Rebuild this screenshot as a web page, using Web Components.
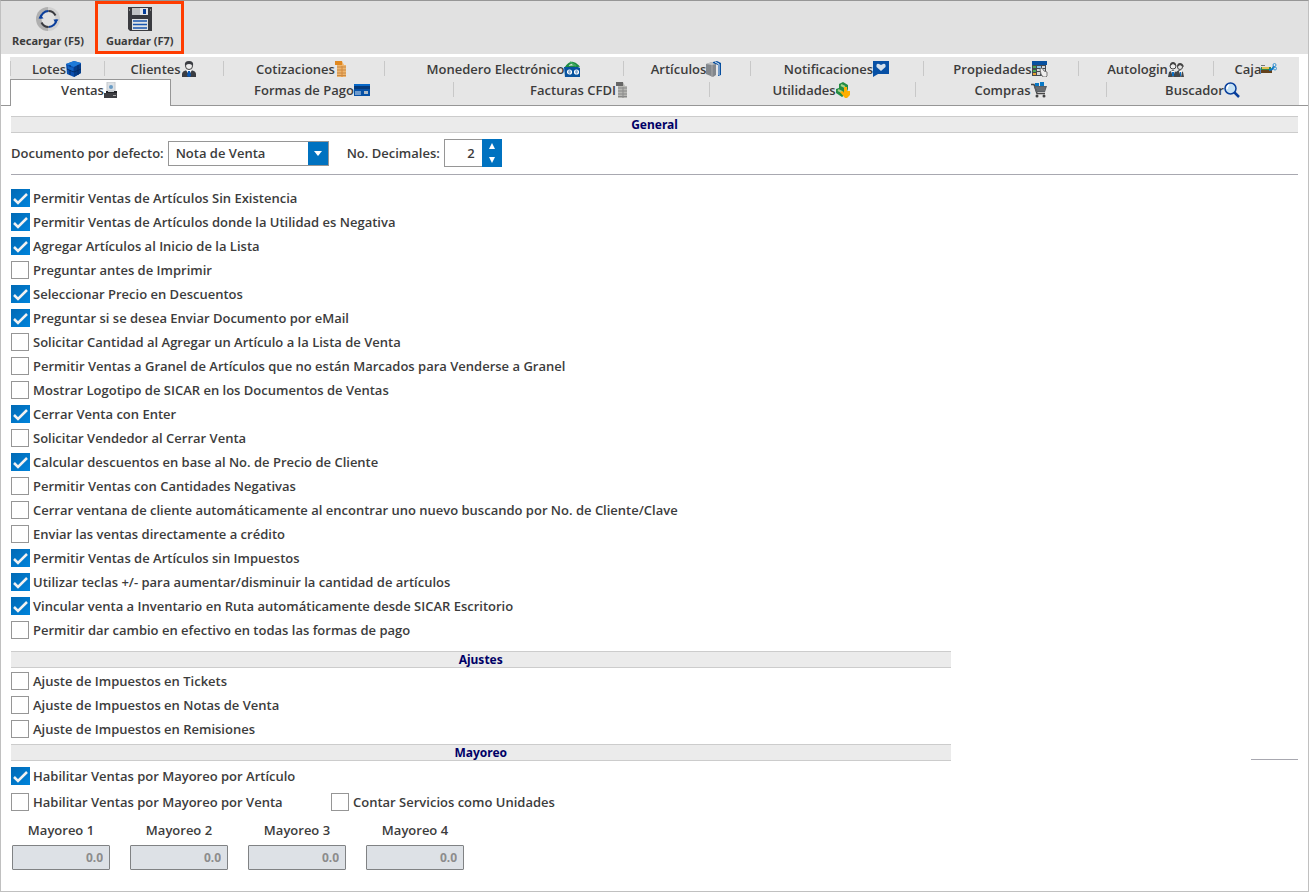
<!DOCTYPE html>
<html lang="es">
<head>
<meta charset="utf-8">
<meta name="viewport" content="width=device-width, initial-scale=1">
<title>Configuración</title>
<style>
  * {
    box-sizing: border-box;
  }

  body {
    --text: #3c3c3c;
    --accent: #0072c0;
    --line: #cccccc;
    --edge: #969696;
    margin: 0;
    color: var(--text);
    font: 600 13px/16px "Open Sans", "Noto Sans", sans-serif;
    background: #fff;
  }
</style>
</head>
<body>
<settings-window></settings-window>

<script>
const icons = {
  reload: `<path d="M12 0A12 12 0 0 0 12 24Z" fill="#b0b0b0"/><path d="M12 0a12 12 0 0 1 0 24Z" fill="#d0d0d0"/>
    <circle cx="12.500" cy="12" r="7" fill="#e1e1e1"/>
    <g fill="none" stroke="#0b3f9c" stroke-width="2"><path d="M4.500 11.500a8 8 0 0 1 8-7.500M20.500 12.500a8 8 0 0 1-8 7.500"/></g>
    <g fill="none" stroke="#3a3b40" stroke-width="2"><path d="M12.500 4a8 8 0 0 1 7 4.500M12.500 20a8 8 0 0 1-7-4.500"/></g>
    <path d="M2.500 11.500h5l-3-4zM17.500 12.500h5l-3 4z" fill="#0b3f9c"/>`,
  save: `<path d="M0 0h24v24H2l-2-2z" fill="#3a3b40"/><path d="M4 1h8v7H4z" fill="#c0c2c4"/><path d="M12 1h8v7h-8z" fill="#e4e6e8"/>
    <path d="M15 2h3v5h-3z" fill="#063f9a"/><path d="M4 12h16v11H4z" fill="#e0e3e6"/><path d="M5 14h14M5 17.500h14M5 21h14" stroke="#1a57b0" stroke-width="1.500"/>
    <path d="M1 2h1v2H1zM22 2h1v2h-1z" fill="#888"/>`,
  box: `<path d="M0 3l8-3 7 2v10l-7 4-7-3z" fill="#0b4fae"/><path d="M0 3l8-3 7 2-7 4z" fill="#1d7ad8"/><path d="M8 6l7-3v9l-7 4z" fill="#063d88"/>
    <path d="M1 8l7 3 7-3M4 4v10M12 4v10" fill="none" stroke="#052d66"/><path d="M2 5l5 2v3L2 8z" fill="#1263c2"/>`,
  person: `<path d="M1 16v-3q0-3 5-4h4q5 1 5 4v3z" fill="#3b3d42"/><path d="M5 9l3 5 3-5z" fill="#fff"/><path d="M7 10h2l1 5-2 1-2-1z" fill="#0b58b5"/>
    <circle cx="8" cy="5" r="3.500" fill="#eee" stroke="#444"/><path d="M4 5q-1-5 4-5t4 5q-1-2-4-2T4 5z" fill="#3b3d42"/>`,
  quote: `<path d="M0 0h7l2 4h2v12H2V4H0z" fill="#efb56d"/><path d="M0 0h7v4H0z" fill="#e08820"/><path d="M2 6h9M2 9h9M2 12h9M2 14.500h9" stroke="#c58a4a"/><path d="M7 5v11" stroke="#d7893a"/>`,
  wallet: `<path d="M2 6q6-8 12-1z" fill="#eee" stroke="#1c8b42" stroke-width="2"/><path d="M6 1l6 4" stroke="#3cab5d" stroke-width="2"/>
    <path d="M0 6h14l2 1v9H1z" fill="#07539f"/><g fill="none" stroke="#fff" stroke-width="1.200"><circle cx="5.500" cy="11" r="2"/><circle cx="12.500" cy="11" r="2"/></g><path d="M4 11h4M11 11h3" stroke="#fff"/>`,
  books: `<path d="M0 3l6-2 4 2v11l-3 2-7-3z" fill="#83878c"/><path d="M0 3l6-2 4 2-4 1z" fill="#bfc2c4"/><path d="M6 4v12" stroke="#aaa"/>
    <path d="M7 1l4-1 4 2v12l-3 1V4L7 2z" fill="#084f9f"/><path d="M9 1l4 2v11" fill="none" stroke="#dce9f5"/>`,
  notice: `<path d="M0 0h16v13H5l-5 3z" fill="#0750a5"/><path d="M8 10L3.500 6Q3 2 6 3l2 1 2-1q3-1 2.500 3z" fill="#d4e0ec"/>`,
  sheet: `<path d="M0 4h14v11H0z" fill="#45494e"/><path d="M0 0h15v4H0z" fill="#07509f"/>
    <path d="M1 5h3v2H1zM1 9h3v2H1z" fill="#4aa656"/><path d="M1 12h3v2H1z" fill="#e5a02f"/><path d="M5 5h4v2H5z" fill="#8fc0e6"/>
    <path d="M10 5h3v2h-3zM5 8h4v2H5zM10 8h3v2h-3zM5 11h3v3H5z" fill="#d3d6d8"/><path d="M8 8l2-1 2 3 3 1v4l-1 1h-3l-2-3z" fill="#eee" stroke="#777"/>`,
  people: `<path d="M0 16l1-5 4-2 3 2 3-2 4 2 1 5z" fill="#44474b"/><circle cx="5" cy="5" r="3" fill="#eee" stroke="#444"/><circle cx="12" cy="6" r="2.500" fill="#e5e5e5" stroke="#444"/>
    <path d="M2 5q0-4 3-4t3 4L5 3zM9 6q0-4 3-4t4 4l-4-2z" fill="#454545"/><path d="M3 10h4l-2 6zM11 10h3l-1 6z" fill="#fff"/><path d="M4 11h2v4H4zM12 11h1v4h-1z" fill="#0a70c8"/>`,
  cash: `<path d="M0 6h10v5H0z" fill="#318b45"/><path d="M0 9h11v3H0z" fill="#63411c"/><path d="M1 7h7" stroke="#e2bd54" stroke-width="2"/><path d="M0 4.500h4" stroke="#777"/>
    <path d="M8 9q4 0 5-4" fill="none" stroke="#0876c5" stroke-width="2"/><circle cx="14" cy="7.500" r="1.500" fill="none" stroke="#3b93d2"/><circle cx="13.500" cy="4" r="1.500" fill="none" stroke="#3b93d2"/>`,
  printer: `<path d="M3 0h8v10H3z" fill="#dde1e5" stroke="#c4c8cc"/><circle cx="7" cy="5" r="2" fill="#699bc5"/><path d="M2 9h11v3H2z" fill="#222428"/><path d="M0 11h13v5H0z" fill="#3d3e42"/>
    <path d="M4 8h6v2H4z" fill="#c8ccd0"/><path d="M9 13.500h3" stroke="#aaa"/>`,
  card: `<path d="M0 3h16v11H0z" fill="#0751a6"/><path d="M0 2h16v2H0z" fill="#0768c8"/><path d="M0 4h16v3H0z" fill="#053a7a"/><path d="M1 10h6M1 12h6" stroke="#d5e4f1"/><path d="M10 9h4v3h-4z" fill="#aebbc7"/>`,
  invoice: `<path d="M0 0h7l2 4h2v12H2V4H0z" fill="#b8b8b4"/><path d="M0 0h7v4H0z" fill="#666"/><path d="M2 6h9M2 9h9M2 12h9M2 14.500h9" stroke="#888"/><path d="M7 5v11" stroke="#8c8c8c"/>`,
  profit: `<path d="M0 7l3-1V2l4-2 5 3v4l-2 5-4 3-6-4z" fill="#238c44"/><path d="M2 8l4 2M5 3l4 2" stroke="#a6d489" stroke-width="2"/><path d="M4 10l3-1 1 2V5h3v4h3v4l-3 3H9z" fill="#ffae00"/>`,
  cart: `<path d="M4 1h4v4H4zM9 0h4v4H9z" fill="#0878c6"/><path d="M0 2.500h3l3 9h8" fill="none" stroke="#474747" stroke-width="1.500"/><path d="M3 4h13l-2 6H5z" fill="#5a5e63"/><path d="M5 6h9M6 8h8" stroke="#888" stroke-width=".7"/><circle cx="6" cy="14" r="1.500" fill="#444"/><circle cx="13" cy="14" r="1.500" fill="#444"/>`,
  search: `<circle cx="6.500" cy="6.500" r="5.500" fill="#c6e1f4" stroke="#083f9c" stroke-width="1.500"/><path d="M5 3q-2 1-2 4" stroke="#fff" stroke-width="1.500" fill="none"/><path d="M10.500 10.500L15 15" stroke="#083f9c" stroke-width="2.500"/>`
};

const icon = (name, size) => {
  return `<svg width="${size}" height="${size}" viewBox="0 0 ${size} ${size}" aria-hidden="true">${icons[name]}</svg>`;
};

class ToolButton extends HTMLElement {
  constructor() {
    super();
    this.attachShadow({ mode: 'open' }).innerHTML = `<style>
      :host {
        display: flex;
      }

      button {
        display: flex;
        flex-direction: column;
        align-items: center;
        gap: 2px;
        padding: 3px 8px 0;
        border: 3px solid transparent;
        background: none;
        color: inherit;
        font: bold 11px/16px "Noto Sans", sans-serif;
        white-space: nowrap;
      }

      :host([marked]) button {
        border-color: #ff3c00;
      }
    </style>
    <button type="button">${icon(this.getAttribute('icon'), 24)}<slot></slot></button>`;
  }
}

class TabItem extends HTMLElement {
  constructor() {
    super();
    const selected = this.hasAttribute('selected');
    this.attachShadow({ mode: 'open' }).innerHTML = `<style>
      :host {
        display: flex;
        min-width: 0;
      }

      button {
        flex: 1;
        display: flex;
        align-items: center;
        justify-content: center;
        padding: 0;
        border: 0;
        background: linear-gradient(#c8c8c8, #c8c8c8) no-repeat left center / 1px 15px;
        color: inherit;
        font: inherit;
        white-space: nowrap;
      }

      :host([plain]) button {
        background: none;
      }

      :host([selected]) {
        margin-bottom: -6px;
      }

      :host([selected]) button {
        border: 1px solid var(--edge);
        border-bottom: 0;
        padding-bottom: 7px;
        background: #fff;
      }
    </style>
    <button type="button" role="tab" aria-selected="${selected}"><slot></slot>${icon(this.getAttribute('icon'), 16)}</button>`;
  }
}

class TabStrip extends HTMLElement {
  constructor() {
    super();
    this.attachShadow({ mode: 'open' }).innerHTML = `<style>
      :host {
        display: block;
        padding: 0 9px;
        border-bottom: 1px solid var(--edge);
      }

      .rows {
        padding: 1px 0 5px;
        background: #e6e6e6;
      }

      .row {
        display: grid;
        height: 21px;
      }

      .top {
        grid-template-columns: 94fr 119fr 161fr 239fr 127fr 173fr 155fr 135fr 86fr;
      }

      .front {
        grid-template-columns: 161fr 282fr 256fr 206fr 191fr 193fr;
      }
    </style>
    <div class="rows" role="tablist">
      <div class="row top">
        <tab-item icon="box">Lotes</tab-item>
        <tab-item icon="person">Clientes</tab-item>
        <tab-item icon="quote">Cotizaciones</tab-item>
        <tab-item icon="wallet">Monedero Electrónico</tab-item>
        <tab-item icon="books">Artículos</tab-item>
        <tab-item icon="notice">Notificaciones</tab-item>
        <tab-item icon="sheet">Propiedades</tab-item>
        <tab-item icon="people">Autologin</tab-item>
        <tab-item icon="cash">Caja</tab-item>
      </div>
      <div class="row front">
        <tab-item icon="printer" selected>Ventas</tab-item>
        <tab-item icon="card" plain>Formas de Pago</tab-item>
        <tab-item icon="invoice">Facturas CFDI</tab-item>
        <tab-item icon="profit">Utilidades</tab-item>
        <tab-item icon="cart">Compras</tab-item>
        <tab-item icon="search">Buscador</tab-item>
      </div>
    </div>`;
  }
}

class SectionTitle extends HTMLElement {
  constructor() {
    super();
    this.attachShadow({ mode: 'open' }).innerHTML = `<style>
      :host {
        display: block;
        border: solid var(--line);
        border-width: 1px 0;
        background: #ebebeb;
      }

      h2 {
        margin: 0;
        color: #000066;
        font: bold 12px/15px "Noto Sans", sans-serif;
        text-align: center;
      }
    </style>
    <h2><slot></slot></h2>`;
  }
}

class CheckOption extends HTMLElement {
  constructor() {
    super();
    const checked = this.hasAttribute('checked') ? 'checked' : '';
    this.attachShadow({ mode: 'open' }).innerHTML = `<style>
      :host {
        display: flex;
      }

      label {
        display: flex;
        align-items: center;
        height: 24px;
        white-space: nowrap;
      }

      .mark {
        display: grid;
        width: 22px;
      }

      input, svg {
        grid-area: 1 / 1;
      }

      input {
        appearance: none;
        box-sizing: border-box;
        width: 18px;
        height: 18px;
        margin: 0;
        border: 1px solid var(--edge);
        background: #fff;
      }

      input:checked {
        width: 19px;
        border: 0;
        background: linear-gradient(135deg, #0069b4, #0084dc);
      }

      svg {
        display: none;
        pointer-events: none;
      }

      input:checked + svg {
        display: block;
      }
    </style>
    <label>
      <span class="mark">
        <input type="checkbox" ${checked}>
        <svg width="19" height="18" viewBox="0 0 19 18"><path d="M3 10l4 4 9-9" fill="none" stroke="#f2f2f2" stroke-width="2.500"/></svg>
      </span>
      <slot></slot>
    </label>`;
  }
}

class SelectField extends HTMLElement {
  constructor() {
    super();
    this.attachShadow({ mode: 'open' }).innerHTML = `<style>
      :host {
        display: flex;
        align-items: center;
        gap: 4px;
      }

      .box {
        display: grid;
        grid-template-columns: 1fr 20px;
        width: 161px;
        height: 25px;
        box-sizing: border-box;
        border: 1px solid var(--edge);
      }

      select {
        grid-area: 1 / 1 / 2 / 3;
        appearance: none;
        padding: 0 7px;
        border: 0;
        background: none;
        color: inherit;
        font: inherit;
      }

      svg {
        grid-area: 1 / 2;
        width: 20px;
        height: 23px;
        background: var(--accent);
        pointer-events: none;
      }
    </style>
    <label for="field"><slot></slot></label>
    <span class="box">
      <select id="field"><option>${this.getAttribute('value')}</option></select>
      <svg viewBox="0 0 20 23"><path d="M6 9h8l-4 5z" fill="#fff"/></svg>
    </span>`;
  }
}

class SpinField extends HTMLElement {
  constructor() {
    super();
    this.attachShadow({ mode: 'open' }).innerHTML = `<style>
      :host {
        display: flex;
        align-items: center;
        gap: 4px;
      }

      .box {
        display: flex;
        height: 28px;
      }

      input {
        appearance: textfield;
        box-sizing: border-box;
        width: 38px;
        padding: 0 7px;
        border: 1px solid var(--edge);
        border-right: 0;
        color: inherit;
        font: inherit;
        text-align: right;
      }

      input::-webkit-inner-spin-button {
        appearance: none;
        margin: 0;
      }

      .steps {
        display: grid;
        width: 20px;
        background: var(--accent);
      }

      button {
        display: grid;
        place-items: center;
        padding: 0;
        border: 0;
        background: none;
      }
    </style>
    <label for="field"><slot></slot></label>
    <span class="box">
      <input id="field" type="number" value="${this.getAttribute('value')}">
      <span class="steps">
        <button type="button" aria-label="Más"><svg width="6" height="6"><path d="M0 6h6L3 0z" fill="#fff"/></svg></button>
        <button type="button" aria-label="Menos"><svg width="6" height="6"><path d="M0 0h6L3 6z" fill="#fff"/></svg></button>
      </span>
    </span>`;

    const input = this.shadowRoot.querySelector('input');
    const [up, down] = this.shadowRoot.querySelectorAll('button');
    up.addEventListener('click', () => input.stepUp());
    down.addEventListener('click', () => input.stepDown());
  }
}

class AmountField extends HTMLElement {
  constructor() {
    super();
    this.attachShadow({ mode: 'open' }).innerHTML = `<style>
      :host {
        display: flex;
        flex-direction: column;
        gap: 7px;
        width: 98px;
      }

      label {
        text-align: center;
      }

      input {
        box-sizing: border-box;
        width: 100%;
        height: 25px;
        padding: 0 6px;
        border: 1px solid #808284;
        border-radius: 1px;
        background: #dde1e6;
        color: #8c8c8c;
        font: bold 12px/16px "Noto Sans", sans-serif;
        text-align: right;
      }
    </style>
    <label for="field"><slot></slot></label>
    <input id="field" type="text" value="0.0" disabled>`;
  }
}

class SettingsWindow extends HTMLElement {
  constructor() {
    super();
    this.attachShadow({ mode: 'open' }).innerHTML = `<style>
      :host {
        display: flex;
        flex-direction: column;
        box-sizing: border-box;
        min-height: 100vh;
        border: 1px solid #c0c0c0;
        border-top-color: var(--edge);
      }

      header {
        display: flex;
        height: 53px;
        margin-bottom: 3px;
        background: #e1e1e1;
      }

      main {
        padding: 10px;
      }

      .fields {
        display: flex;
        align-items: center;
        gap: 18px;
        padding: 6px 0 7px;
        border-bottom: 1px solid #a8a8b0;
      }

      .options {
        padding: 11px 0 9px;
      }

      .lower {
        display: grid;
        grid-template-columns: 73fr 27fr;
      }

      .wholesale-section {
        grid-column: 1;
      }

      .stub {
        align-self: start;
        justify-self: end;
        width: 47px;
        margin-top: 15px;
        border-top: 1px solid #a8a8b0;
      }

      .adjust {
        padding: 1px 0 3px;
      }

      .wholesale {
        display: grid;
        grid-template-columns: 320px 1fr;
        row-gap: 2px;
        padding-top: 3px;
      }

      .wholesale :first-child {
        grid-column: 1 / -1;
      }

      .amounts {
        display: flex;
        flex-wrap: wrap;
        gap: 20px;
        padding: 8px 1px;
      }
    </style>
    <header>
      <tool-button icon="reload">Recargar (F5)</tool-button>
      <tool-button icon="save" marked>Guardar (F7)</tool-button>
    </header>
    <tab-strip></tab-strip>
    <main>
      <section-title>General</section-title>
      <div class="fields">
        <select-field value="Nota de Venta">Documento por defecto:</select-field>
        <spin-field value="2">No. Decimales:</spin-field>
      </div>
      <div class="options">
        <check-option checked>Permitir Ventas de Artículos Sin Existencia</check-option>
        <check-option checked>Permitir Ventas de Artículos donde la Utilidad es Negativa</check-option>
        <check-option checked>Agregar Artículos al Inicio de la Lista</check-option>
        <check-option>Preguntar antes de Imprimir</check-option>
        <check-option checked>Seleccionar Precio en Descuentos</check-option>
        <check-option checked>Preguntar si se desea Enviar Documento por eMail</check-option>
        <check-option>Solicitar Cantidad al Agregar un Artículo a la Lista de Venta</check-option>
        <check-option>Permitir Ventas a Granel de Artículos que no están Marcados para Venderse a Granel</check-option>
        <check-option>Mostrar Logotipo de SICAR en los Documentos de Ventas</check-option>
        <check-option checked>Cerrar Venta con Enter</check-option>
        <check-option>Solicitar Vendedor al Cerrar Venta</check-option>
        <check-option checked>Calcular descuentos en base al No. de Precio de Cliente</check-option>
        <check-option>Permitir Ventas con Cantidades Negativas</check-option>
        <check-option>Cerrar ventana de cliente automáticamente al encontrar uno nuevo buscando por No. de Cliente/Clave</check-option>
        <check-option>Enviar las ventas directamente a crédito</check-option>
        <check-option checked>Permitir Ventas de Artículos sin Impuestos</check-option>
        <check-option checked>Utilizar teclas +/- para aumentar/disminuir la cantidad de artículos</check-option>
        <check-option checked>Vincular venta a Inventario en Ruta automáticamente desde SICAR Escritorio</check-option>
        <check-option>Permitir dar cambio en efectivo en todas las formas de pago</check-option>
      </div>
      <div class="lower">
        <section>
          <section-title>Ajustes</section-title>
          <div class="adjust">
            <check-option>Ajuste de Impuestos en Tickets</check-option>
            <check-option>Ajuste de Impuestos en Notas de Venta</check-option>
            <check-option>Ajuste de Impuestos en Remisiones</check-option>
          </div>
        </section>
        <section class="wholesale-section">
          <section-title>Mayoreo</section-title>
          <div class="wholesale">
            <check-option checked>Habilitar Ventas por Mayoreo por Artículo</check-option>
            <check-option>Habilitar Ventas por Mayoreo por Venta</check-option>
            <check-option>Contar Servicios como Unidades</check-option>
          </div>
          <div class="amounts">
            <amount-field>Mayoreo 1</amount-field>
            <amount-field>Mayoreo 2</amount-field>
            <amount-field>Mayoreo 3</amount-field>
            <amount-field>Mayoreo 4</amount-field>
          </div>
        </section>
        <div class="stub"></div>
      </div>
    </main>`;
  }
}

customElements.define('tool-button', ToolButton);
customElements.define('tab-item', TabItem);
customElements.define('tab-strip', TabStrip);
customElements.define('section-title', SectionTitle);
customElements.define('check-option', CheckOption);
customElements.define('select-field', SelectField);
customElements.define('spin-field', SpinField);
customElements.define('amount-field', AmountField);
customElements.define('settings-window', SettingsWindow);
</script>
</body>
</html>
